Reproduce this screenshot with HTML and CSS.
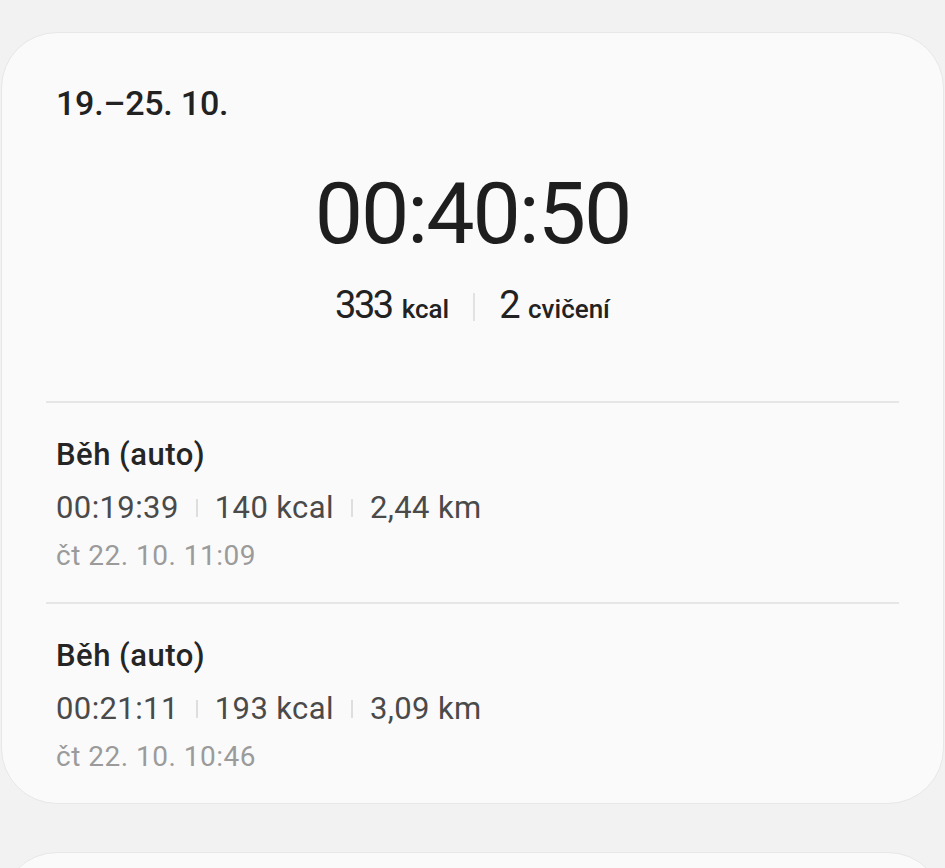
FILE: index.html
```html
<!DOCTYPE html>
<html lang="cs">
<head>
    <meta charset="UTF-8">
    <meta name="viewport" content="width=device-width, initial-scale=1.0">
    <title>Cvičení</title>
    <link rel="stylesheet" href="styles.css">
</head>
<body>
    <!-- Week summary -->
    <div class="card">
        <div class="summary">
            <div class="week">19.–25. 10.</div>
            <div class="clock">00:40:50</div>
            <div class="totals">
                <span class="big">333</span><span class="unit">kcal</span>
                <span class="bar"></span>
                <span class="big">2</span><span class="unit">cvičení</span>
            </div>
        </div>

        <div class="item">
            <div class="item-title">Běh (auto)</div>
            <div class="item-meta">
                <span>00:19:39</span><span class="sep"></span>
                <span>140 kcal</span><span class="sep"></span>
                <span>2,44 km</span>
            </div>
            <div class="item-date">čt 22. 10. 11:09</div>
        </div>

        <div class="item">
            <div class="item-title">Běh (auto)</div>
            <div class="item-meta">
                <span>00:21:11</span><span class="sep"></span>
                <span>193 kcal</span><span class="sep"></span>
                <span>3,09 km</span>
            </div>
            <div class="item-date">čt 22. 10. 10:46</div>
        </div>
    </div>

    <!-- Next week (cut off) -->
    <div class="card card-next"></div>
</body>
</html>
```

FILE: styles.css
```css
html, body {
    margin: 0;
    padding: 0;
}
body {
    background-color: #f2f2f2;
    font-family: Roboto, "Noto Sans", Arial, sans-serif;
    padding: 32px 1px 0;
    height: 868px;
    box-sizing: border-box;
    overflow: hidden;
}
.card {
    background-color: #fafafa;
    border: 1px solid #e7e7e7;
    border-radius: 56px;
    padding: 0 44px;
}
.card-next {
    margin-top: 48px;
    height: 120px;
}
.summary {
    padding: 50px 0 70px;
    text-align: center;
}
.week {
    text-align: left;
    padding-left: 10px;
    font-size: 34px;
    line-height: 40px;
    font-weight: 500;
    letter-spacing: -0.2px;
    color: #222;
}
.clock {
    margin-top: 46px;
    font-size: 86px;
    line-height: 90px;
    letter-spacing: -2px;
    color: #1e1e1e;
    font-variant-numeric: tabular-nums;
}
.totals {
    margin-top: 24px;
    display: flex;
    justify-content: center;
    align-items: baseline;
    line-height: 44px;
    color: #222;
}
.totals .big {
    font-size: 38px;
    font-weight: 400;
    letter-spacing: -2.5px;
    margin-right: 10px;
}
.totals .unit {
    font-size: 26px;
    font-weight: 500;
}
.totals .bar {
    align-self: center;
    width: 2px;
    height: 28px;
    background-color: #e2e2e2;
    margin: 0 24px;
}
.item {
    border-top: 2px solid #e6e6e6;
    padding: 32px 10px 26px;
}
.item-title {
    font-size: 31px;
    line-height: 40px;
    font-weight: 500;
    letter-spacing: 0.5px;
    color: #252525;
}
.item-meta {
    margin-top: 9px;
    display: flex;
    align-items: center;
    font-size: 31px;
    line-height: 48px;
    letter-spacing: 0.4px;
    color: #4a4a4a;
}
.sep {
    width: 2px;
    height: 18px;
    background-color: #dedede;
    margin: 0 17px;
}
.item-date {
    margin-top: 4px;
    font-size: 28px;
    line-height: 40px;
    letter-spacing: 0.5px;
    color: #9b9b9b;
}
```
